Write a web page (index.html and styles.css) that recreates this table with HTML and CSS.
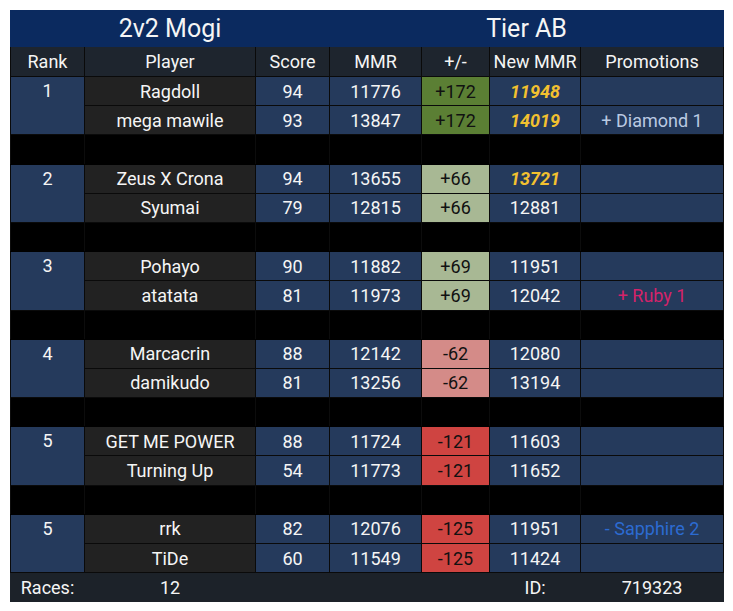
FILE: index.html
```html
<!DOCTYPE html>
<html>
<head>
<meta charset="utf-8">
<link rel="stylesheet" href="styles.css">
</head>
<body>
<table class="mogi">
  <colgroup>
    <col class="c-rank"><col class="c-player"><col class="c-score"><col class="c-mmr"><col class="c-delta"><col class="c-new"><col class="c-promo">
  </colgroup>
  <tr class="title">
    <td colspan="3">2v2 Mogi</td>
    <td colspan="4">Tier AB</td>
  </tr>
  <tr class="head">
    <td>Rank</td><td>Player</td><td>Score</td><td>MMR</td><td>+/-</td><td>New MMR</td><td>Promotions</td>
  </tr>

  <tr class="row"><td class="rank" rowspan="2">1</td><td class="player">Ragdoll</td><td class="blue">94</td><td class="blue">11776</td><td class="d-gain-big">+172</td><td class="blue gold">11948</td><td class="blue"></td></tr>
  <tr class="row"><td class="player">mega mawile</td><td class="blue">93</td><td class="blue">13847</td><td class="d-gain-big">+172</td><td class="blue gold">14019</td><td class="blue diamond">+ Diamond 1</td></tr>
  <tr class="sep"><td></td><td></td><td></td><td></td><td></td><td></td><td></td></tr>

  <tr class="row"><td class="rank" rowspan="2">2</td><td class="player">Zeus X Crona</td><td class="blue">94</td><td class="blue">13655</td><td class="d-gain">+66</td><td class="blue gold">13721</td><td class="blue"></td></tr>
  <tr class="row"><td class="player">Syumai</td><td class="blue">79</td><td class="blue">12815</td><td class="d-gain">+66</td><td class="blue">12881</td><td class="blue"></td></tr>
  <tr class="sep"><td></td><td></td><td></td><td></td><td></td><td></td><td></td></tr>

  <tr class="row"><td class="rank" rowspan="2">3</td><td class="player">Pohayo</td><td class="blue">90</td><td class="blue">11882</td><td class="d-gain">+69</td><td class="blue">11951</td><td class="blue"></td></tr>
  <tr class="row"><td class="player">atatata</td><td class="blue">81</td><td class="blue">11973</td><td class="d-gain">+69</td><td class="blue">12042</td><td class="blue ruby">+ Ruby 1</td></tr>
  <tr class="sep"><td></td><td></td><td></td><td></td><td></td><td></td><td></td></tr>

  <tr class="row"><td class="rank" rowspan="2">4</td><td class="player">Marcacrin</td><td class="blue">88</td><td class="blue">12142</td><td class="d-loss">-62</td><td class="blue">12080</td><td class="blue"></td></tr>
  <tr class="row"><td class="player">damikudo</td><td class="blue">81</td><td class="blue">13256</td><td class="d-loss">-62</td><td class="blue">13194</td><td class="blue"></td></tr>
  <tr class="sep"><td></td><td></td><td></td><td></td><td></td><td></td><td></td></tr>

  <tr class="row"><td class="rank" rowspan="2">5</td><td class="player">GET ME POWER</td><td class="blue">88</td><td class="blue">11724</td><td class="d-loss-big">-121</td><td class="blue">11603</td><td class="blue"></td></tr>
  <tr class="row"><td class="player">Turning Up</td><td class="blue">54</td><td class="blue">11773</td><td class="d-loss-big">-121</td><td class="blue">11652</td><td class="blue"></td></tr>
  <tr class="sep"><td></td><td></td><td></td><td></td><td></td><td></td><td></td></tr>

  <tr class="row"><td class="rank" rowspan="2">5</td><td class="player">rrk</td><td class="blue">82</td><td class="blue">12076</td><td class="d-loss-big">-125</td><td class="blue">11951</td><td class="blue sapphire">- Sapphire 2</td></tr>
  <tr class="row"><td class="player">TiDe</td><td class="blue">60</td><td class="blue">11549</td><td class="d-loss-big">-125</td><td class="blue">11424</td><td class="blue"></td></tr>

  <tr class="foot">
    <td>Races:</td><td>12</td><td></td><td></td><td></td><td>ID:</td><td>719323</td>
  </tr>
</table>
</body>
</html>
```

FILE: styles.css
```css
html, body {
  margin: 0;
  padding: 0;
  background: #ffffff;
}
body {
  padding: 10px;
  font-family: Roboto, "Liberation Sans", sans-serif;
}
.mogi {
  border-collapse: collapse;
  table-layout: fixed;
  width: 713px;
  color: #f5f5f5;
  font-size: 18px;
  text-align: center;
}
.c-rank { width: 74px; }
.c-player { width: 171px; }
.c-score { width: 74px; }
.c-mmr { width: 92px; }
.c-delta { width: 68px; }
.c-new { width: 91px; }
.c-promo { width: 143px; }

.mogi td {
  border: 1px solid #0a0a0a;
  padding: 0;
  white-space: nowrap;
  overflow: hidden;
}
.title td {
  background: #0b2a5f;
  height: 35px;
  font-size: 25px;
  border-color: #0b2a5f;
}
.head td {
  background: #1e252e;
  height: 29px;
  border-color: #0a0a0a;
}
.row td {
  height: 28.2px;
}
.rank {
  background: #253a5c;
  vertical-align: top;
  line-height: 27px;
}
.player { background: #222222; }
.blue { background: #253a5c; }
.gold {
  color: #f3c12f;
  font-weight: bold;
  font-style: italic;
}
.d-gain-big { background: #5b7f34; color: #111; }
.d-gain { background: #a8b894; color: #111; }
.d-loss { background: #d48b88; color: #111; }
.d-loss-big { background: #cf4441; color: #111; }
.diamond { color: #b9c9e2; }
.ruby { color: #d3236a; }
.sapphire { color: #2c6bd1; }

.sep td {
  background: #000;
  height: 28.2px;
  border-color: #000 #0c0c0c;
}
.foot td {
  background: #1c2229;
  height: 28px;
  border-color: #1c2229;
}
```
